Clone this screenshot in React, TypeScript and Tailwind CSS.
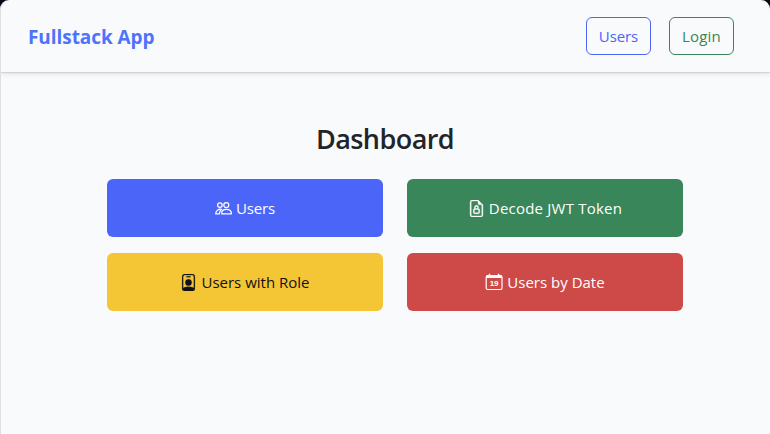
import { BsFileEarmarkLock, BsPersonBadge } from "react-icons/bs";

type IconProps = { className?: string };

function PeopleIcon({ className }: IconProps) {
  return (
    <svg className={className} viewBox="0 0 17 17" fill="none" stroke="currentColor" strokeWidth="1.25" strokeLinejoin="round" strokeLinecap="round">
      <circle cx="4.9" cy="5.1" r="2.3" />
      <circle cx="11.3" cy="5.1" r="2.5" />
      <path d="M6.8 13.8c-.5-2.8 1.4-4.4 4.6-4.4s5.2 1.7 5 4.4z" />
      <path d="M6.6 9.3C3.2 8.8.9 10.7.7 13.8h3.7c0-1.8.7-3.2 2.2-4.5z" />
    </svg>
  );
}

function CalendarIcon({ className }: IconProps) {
  return (
    <svg className={className} viewBox="0 0 18 18" fill="none" stroke="currentColor">
      <rect x="1.2" y="2.6" width="15.8" height="13.9" rx="1.6" strokeWidth="1.2" />
      <path d="M1.2 3.8h15.8" strokeWidth="2.4" />
      <path d="M4.5 .8v3M13.6 .8v3" strokeWidth="1.5" />
      <text x="9.1" y="12.9" textAnchor="middle" fill="currentColor" stroke="none" fontFamily="Liberation Sans, sans-serif" fontWeight="700" fontSize="8">19</text>
    </svg>
  );
}

const tiles = [
  { label: "Users", Icon: PeopleIcon, tile: "bg-[#4b65f8] text-white", icon: "size-[17px]", text: "tracking-[-0.2px]" },
  { label: "Decode JWT Token", Icon: BsFileEarmarkLock, tile: "bg-[#388659] text-white", icon: "size-[17px] [stroke-width:0.35]", text: "tracking-[0.22px]" },
  { label: "Users with Role", Icon: BsPersonBadge, tile: "bg-[#f4c636] text-[#111]", icon: "size-[17px] [stroke-width:0.2]", text: "tracking-normal" },
  { label: "Users by Date", Icon: CalendarIcon, tile: "bg-[#cd4a48] text-white", icon: "size-[18px]", text: "tracking-normal" },
];

export default function App() {
  return (
    <div className="h-[434px] w-[770px] overflow-hidden bg-[#080818] font-['Open_Sans','Noto_Sans',sans-serif]">
      <div className="h-full overflow-hidden rounded-t-[9px] border-l border-[#dfe0e3] bg-[#f8fafc]">
        <header className="flex h-[72px] items-center justify-between pr-9 pl-[27px] shadow-[0_1px_1px_rgba(0,0,0,0.1),0_2px_5px_rgba(0,0,0,0.09)]">
          <span className="pt-0.5 text-[19px] font-bold tracking-[-0.06px] text-[#4e73fb]">Fullstack App</span>
          <nav className="flex gap-[18px] text-[15px]">
            <button className="h-[38px] w-[65px] rounded-md border border-[#4b65f8] tracking-[-0.1px] text-[#4b65f8]">Users</button>
            <button className="h-[38px] w-[65px] rounded-md border border-[#388659] tracking-[0.2px] text-[#388659]">Login</button>
          </nav>
        </header>
        <main className="pt-[46px] pr-[87px] pl-[106px]">
          <h1 className="-ml-5 text-center text-[27px] leading-[42px] font-semibold tracking-[-0.55px] text-[#212529]">Dashboard</h1>
          <div className="mt-[19px] grid grid-cols-2 gap-x-6 gap-y-4">
            {tiles.map(({ label, Icon, tile, icon, text }) => (
              <button key={label} className={`flex h-[58px] items-center justify-center gap-1 rounded-md text-[15px] ${tile}`}>
                <Icon className={icon} />
                <span className={text}>{label}</span>
              </button>
            ))}
          </div>
        </main>
      </div>
    </div>
  );
}
